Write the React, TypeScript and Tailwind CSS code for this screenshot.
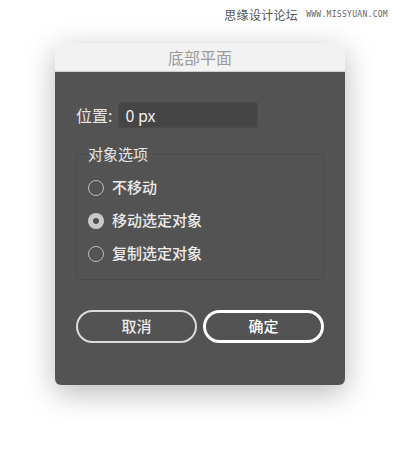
import React from "react";

const font = { fontFamily: '"Noto Sans CJK SC", "Noto Sans", sans-serif' };

function Radio({ label, checked }: { label: string; checked?: boolean }) {
  return (
    <div className="flex h-[33px] items-center gap-[8px]">
      {checked ? (
        <span className="flex h-[16px] w-[16px] items-center justify-center rounded-full bg-[#c8c8c8]">
          <span className="h-[6px] w-[6px] rounded-full bg-[#505050]" />
        </span>
      ) : (
        <span className="h-[16px] w-[16px] rounded-full border-[1.5px] border-[#bdbdbd]" />
      )}
      <span className="text-[15px] font-medium text-[#ececec]">{label}</span>
    </div>
  );
}

export default function App() {
  return (
    <div className="relative h-[451px] w-[400px] bg-white" style={font}>
      <div className="flex items-center justify-end gap-[8px] pr-[12px] pt-[6px]">
        <span className="text-[12px] tracking-[0.3px] text-[#555]">思缘设计论坛</span>
        <span className="text-[8px] tracking-[0.3px] text-[#666]" style={{ fontFamily: '"DejaVu Sans Mono", monospace' }}>
          WWW.MISSYUAN.COM
        </span>
      </div>
      <div className="ml-[55px] mt-[19px] w-[290px] overflow-hidden rounded-[6px] shadow-[0_8px_30px_rgba(0,0,0,0.28)]">
        <div className="flex h-[29px] items-center justify-center border-b border-[#cfcfcf] bg-[#f2f2f2]">
          <span className="text-[16px] text-[#9a9a9a]">底部平面</span>
        </div>
        <div className="bg-[#535353] px-[21px] pb-[42px] pt-[30px]">
          <div className="flex items-center gap-[6px]">
            <span className="text-[16px] text-[#e6e6e6]">位置:</span>
            <div className="flex h-[26px] w-[140px] items-center rounded-[3px] border border-[#4a4a4a] bg-[#454545] px-[6px] text-[16px] text-[#f0f0f0]">
              0 px
            </div>
          </div>
          <fieldset className="mt-[17px] h-[135px] rounded-[3px] border border-[#4b4b4b] px-[11px] pb-0 pt-0">
            <legend className="px-0 text-[15px] leading-[18px] text-[#e6e6e6]">对象选项</legend>
            <div className="mt-[8px]">
              <Radio label="不移动" />
              <Radio label="移动选定对象" checked />
              <Radio label="复制选定对象" />
            </div>
          </fieldset>
          <div className="mt-[30px] flex gap-[6px]">
            <button className="flex h-[33px] w-[121px] items-center justify-center rounded-full border-2 border-[#dcdcdc] text-[15px] font-medium text-[#ececec]">
              取消
            </button>
            <button className="flex h-[33px] w-[121px] items-center justify-center rounded-full border-[3px] border-white text-[15px] font-medium text-white">
              确定
            </button>
          </div>
        </div>
      </div>
    </div>
  );
}
